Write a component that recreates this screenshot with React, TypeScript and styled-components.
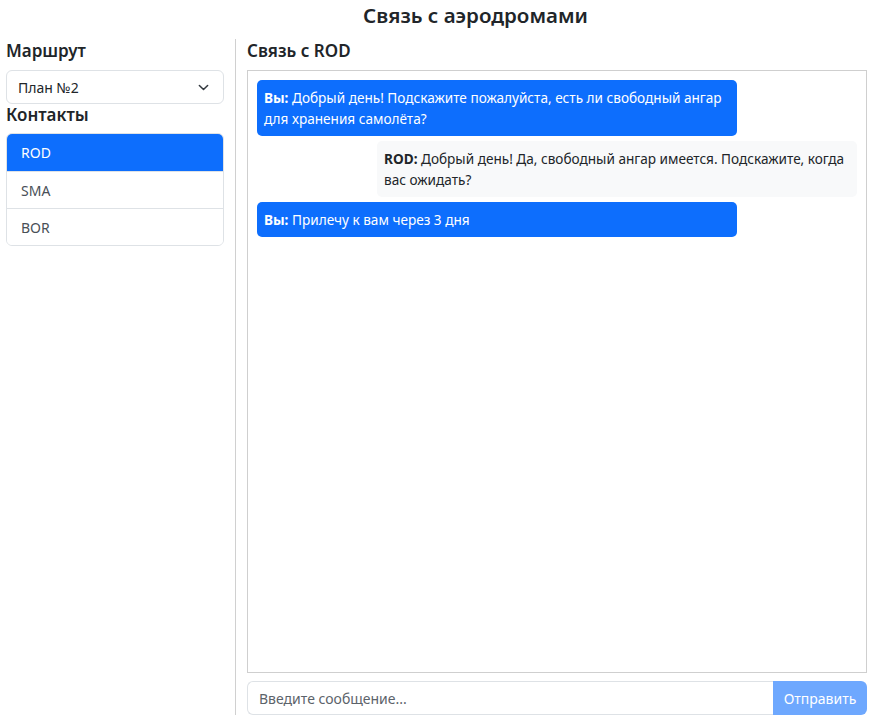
import styled, { createGlobalStyle } from "styled-components"

const GlobalStyle = createGlobalStyle`
    * { box-sizing: border-box; }
    body {
        margin: 0;
        font-family: "Noto Sans", "Open Sans", sans-serif;
        color: #212529;
        background: #fff;
    }
`

const Page = styled.div`
    height: 100vh;
    display: flex;
    flex-direction: column;
    padding: 0 8px 6px 6px;
`

// в оригинале заголовок смещён вправо
const Title = styled.h1`
    margin: 1px 0 10px;
    padding-left: 78px;
    text-align: center;
    font-size: 20.5px;
    font-weight: 600;
    line-height: 28px;
`

const Main = styled.div`
    flex: 1;
    display: flex;
    min-height: 0;
`

const Sidebar = styled.aside`
    width: 230px;
    padding-right: 11px;
    border-right: 1px solid #d0d0d0;
    display: flex;
    flex-direction: column;
`

const SectionTitle = styled.h2`
    margin: 0 0 7px;
    font-size: 17px;
    font-weight: 600;
    line-height: 24px;
`

const SelectBox = styled.div`
    height: 34px;
    margin-bottom: -1px;
    border: 1px solid #dee2e6;
    border-radius: 6px;
    padding: 0 14px 0 11px;
    display: flex;
    align-items: center;
    justify-content: space-between;
    font-size: 14px;
`

const ContactList = styled.div`
    margin-top: -1px;
    border: 1px solid #dee2e6;
    border-radius: 6px;
    overflow: hidden;
`

const ContactItem = styled.div<{ $active?: boolean }>`
    height: 37px;
    display: flex;
    align-items: center;
    padding: 0 14px;
    font-size: 14px;
    color: ${(p) => (p.$active ? "#fff" : "#495057")};
    background: ${(p) => (p.$active ? "#0d6efd" : "#fff")};
    & + & {
        border-top: 1px solid #dee2e6;
    }
`

const ChatArea = styled.section`
    flex: 1;
    padding-left: 11px;
    display: flex;
    flex-direction: column;
    min-width: 0;
`

const ChatBox = styled.div`
    flex: 1;
    border: 1px solid #cfcfcf;
    padding: 9px;
    overflow-y: auto;
    display: flex;
    flex-direction: column;
    gap: 5px;
`

const Bubble = styled.div<{ $mine?: boolean }>`
    width: 80%;
    align-self: ${(p) => (p.$mine ? "flex-start" : "flex-end")};
    padding: 7px 7px;
    border-radius: 5px;
    font-size: 13.6px;
    line-height: 21px;
    background: ${(p) => (p.$mine ? "#0d6efd" : "#f8f9fa")};
    color: ${(p) => (p.$mine ? "#fff" : "#212529")};
    b { font-weight: 700; }
`

const InputRow = styled.div`
    margin-top: 8px;
    display: flex;
    height: 34px;
`

const MessageInput = styled.input`
    flex: 1;
    border: 1px solid #dee2e6;
    border-right: none;
    border-radius: 6px 0 0 6px;
    padding: 0 11px;
    font-family: inherit;
    font-size: 14px;
    color: #212529;
    &::placeholder {
        color: #5c636a;
    }
`

const SendButton = styled.button`
    width: 94px;
    border: none;
    border-radius: 0 6px 6px 0;
    background: #6ea8fe;
    color: #fff;
    font-family: inherit;
    font-size: 14px;
`

const Chevron = () => (
    <svg width="11" height="11" viewBox="0 0 16 16" fill="none" stroke="#343a40" strokeWidth="2.2" strokeLinecap="round" strokeLinejoin="round">
        <path d="m2 5 6 6 6-6" />
    </svg>
)

const contacts = ["ROD", "SMA", "BOR"]

const messages = [
    { mine: true, from: "Вы", text: "Добрый день! Подскажите пожалуйста, есть ли свободный ангар для хранения самолёта?" },
    { mine: false, from: "ROD", text: "Добрый день! Да, свободный ангар имеется. Подскажите, когда вас ожидать?" },
    { mine: true, from: "Вы", text: "Прилечу к вам через 3 дня" },
]

export default function App() {
    return (
        <>
            <GlobalStyle />
            <Page>
                <Title>Связь с аэродромами</Title>
                <Main>
                    <Sidebar>
                        <SectionTitle>Маршрут</SectionTitle>
                        <SelectBox>
                            <span>План №2</span>
                            <Chevron />
                        </SelectBox>
                        <SectionTitle>Контакты</SectionTitle>
                        <ContactList>
                            {contacts.map((c, i) => (
                                <ContactItem key={c} $active={i === 0}>{c}</ContactItem>
                            ))}
                        </ContactList>
                    </Sidebar>
                    <ChatArea>
                        <SectionTitle>Связь с ROD</SectionTitle>
                        <ChatBox>
                            {messages.map((m, i) => (
                                <Bubble key={i} $mine={m.mine}>
                                    <b>{m.from}:</b> {m.text}
                                </Bubble>
                            ))}
                        </ChatBox>
                        <InputRow>
                            <MessageInput placeholder="Введите сообщение..." />
                            <SendButton disabled>Отправить</SendButton>
                        </InputRow>
                    </ChatArea>
                </Main>
            </Page>
        </>
    )
}
